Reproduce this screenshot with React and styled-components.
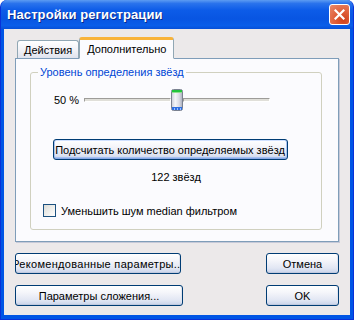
import React from 'react'
import styled, { createGlobalStyle } from 'styled-components'

const GlobalStyle = createGlobalStyle`
  html, body {
    margin: 0;
    padding: 0;
    background: #ffffff;
  }
  body {
    font-family: "Liberation Sans", Arial, sans-serif;
    font-size: 11px;
    color: #000;
  }
`

const Window = styled.div`
  width: 354px;
  height: 320px;
  box-sizing: border-box;
  display: flex;
  flex-direction: column;
  background: #0055e5;
  border: 1px solid #0831d9;
  border-top: none;
  border-radius: 7px 7px 0 0;
  overflow: hidden;
`

const TitleBar = styled.div`
  height: 29px;
  flex: none;
  display: flex;
  align-items: center;
  justify-content: space-between;
  padding: 0 3px 0 6px;
  background: linear-gradient(180deg, #5d9cf2 0%, #2a73ec 12%, #0d5ce8 35%, #0855e2 65%, #0a5ee9 88%, #0650d8 100%);
  color: #ffffff;
  font-family: "Liberation Sans", Arial, sans-serif;
  font-weight: bold;
  font-size: 13px;
  letter-spacing: 0.1px;
  text-shadow: 1px 1px 0 #0a2a8a;
`

const CloseButton = styled.div`
  width: 19px;
  height: 19px;
  border: 1px solid #ffffff;
  border-radius: 3px;
  background: radial-gradient(circle at 70% 80%, #d0411c 0%, #e0603b 45%, #e98a6c 100%);
  display: flex;
  align-items: center;
  justify-content: center;
`

const Client = styled.div`
  flex: 1;
  margin: 0 3px 4px;
  background: #ece9ea;
  padding: 7px 11px 0;
  display: flex;
  flex-direction: column;
`

const TabRow = styled.div`
  display: flex;
  align-items: flex-end;
  height: 22px;
  padding-left: 2px;
  position: relative;
  z-index: 1;
`

const Tab = styled.div`
  box-sizing: border-box;
  height: ${p => (p.$active ? '22px' : '18px')};
  padding: 0 ${p => (p.$active ? '7px' : '6px')};
  display: flex;
  align-items: center;
  border: 1px solid #91a7b4;
  border-bottom: ${p => (p.$active ? '1px solid #fbfbfe' : 'none')};
  border-top: ${p => (p.$active ? '3px solid #f8b33a' : '1px solid #91a7b4')};
  border-radius: 3px 3px 0 0;
  background: ${p => (p.$active ? '#fbfbfe' : 'linear-gradient(180deg, #ffffff 0%, #f3f3f7 50%, #dfe3ee 100%)')};
  margin-bottom: ${p => (p.$active ? '-1px' : '0')};
  font-size: 11px;
  padding-top: ${p => (p.$active ? '0' : '1px')};
`

const Panel = styled.div`
  box-sizing: border-box;
  width: 324px;
  height: 184px;
  border: 1px solid #7f9db9;
  background: #fbfbfe;
  box-shadow: 1px 1px 0 #c6c9d8;
  padding: 7px 16px 0 14px;
`

const GroupBox = styled.fieldset`
  box-sizing: border-box;
  margin: 0;
  height: 164px;
  border: 1px solid #d0d0bf;
  border-radius: 3px;
  padding: 0;
  display: flex;
  flex-direction: column;
`

const Legend = styled.legend`
  margin-left: 7px;
  padding: 0 2px;
  color: #0046d5;
  font-size: 11px;
`

const SliderRow = styled.div`
  display: flex;
  align-items: center;
  height: 22px;
  margin-top: 11px;
  padding-left: 23px;
`

const SliderLabel = styled.span`
  width: 30px;
`

const Track = styled.div`
  width: 186px;
  height: 22px;
  display: flex;
  align-items: center;
`

const TrackLine = styled.div`
  box-sizing: border-box;
  flex: 1;
  height: 4px;
  border-top: 1px solid #9d9c99;
  border-left: 1px solid #9d9c99;
  border-bottom: 1px solid #ffffff;
  border-right: 1px solid #ffffff;
  background: #e0dfd9;
`

const Button = styled.div`
  box-sizing: border-box;
  width: ${p => p.$w}px;
  height: 21px;
  flex: none;
  display: flex;
  align-items: center;
  justify-content: center;
  white-space: nowrap;
  overflow: hidden;
  border: 1px solid #003c74;
  border-radius: 3px;
  background: linear-gradient(180deg, #ffffff 0%, #f4f5fa 35%, #e1e6f3 75%, #c9d3ea 100%);
  box-shadow: ${p => (p.$default
    ? 'inset 0 -1px #8aa9e6, inset 1px 0 #a9c2f1, inset -1px 0 #a9c2f1, inset 0 1px #cfe0ff, inset 0 -2px #a6c0f0'
    : 'inset 0 -1px #c0c9de, inset -1px 0 #e0e4ee')};
  font-size: 11px;
  letter-spacing: ${p => p.$spacing || 0}px;
`

const CenterRow = styled.div`
  display: flex;
  justify-content: center;
  margin-top: ${p => p.$mt}px;
  padding-right: ${p => p.$pr || 0}px;
`

const CheckRow = styled.label`
  display: flex;
  align-items: center;
  gap: 5px;
  margin-top: 21px;
  padding-left: 12px;
`

const CheckBox = styled.span`
  box-sizing: border-box;
  width: 13px;
  height: 13px;
  border: 1px solid #1c5180;
  background: linear-gradient(135deg, #dcdcd7 0%, #f5f5f3 70%, #ffffff 100%);
`

const Footer = styled.div`
  display: flex;
  flex-direction: column;
  gap: 11px;
  margin-top: 11px;
`

const FooterRow = styled.div`
  display: flex;
  justify-content: space-between;
  width: 324px;
`

function SliderThumb() {
  return (
    <svg width="12" height="22" viewBox="0 0 12 22">
      <defs>
        <linearGradient id="th" x1="0" x2="1" y1="0" y2="0">
          <stop offset="0" stopColor="#c9ccd8" />
          <stop offset="0.35" stopColor="#f4f5f8" />
          <stop offset="0.7" stopColor="#d9dbe4" />
          <stop offset="1" stopColor="#a8acbb" />
        </linearGradient>
      </defs>
      <rect x="0.5" y="0.5" width="11" height="21" rx="2" fill="url(#th)" stroke="#7a8190" />
      <rect x="1" y="1" width="10" height="2" fill="#21c33d" />
      <rect x="1" y="3" width="10" height="1" fill="#8ee08e" />
      <rect x="1" y="18" width="10" height="3" fill="#2f6fe0" />
      <rect x="3" y="19" width="1" height="2" fill="#9cc0ff" />
      <rect x="6" y="19" width="1" height="2" fill="#9cc0ff" />
      <rect x="9" y="19" width="1" height="2" fill="#9cc0ff" />
    </svg>
  )
}

function CloseIcon() {
  return (
    <svg width="11" height="11" viewBox="0 0 11 11">
      <path d="M1.5 1.5 L9.5 9.5 M9.5 1.5 L1.5 9.5" stroke="#ffffff" strokeWidth="2.2" strokeLinecap="square" />
    </svg>
  )
}

export default function App() {
  return (
    <>
      <GlobalStyle />
      <Window>
        <TitleBar>
          <span>Настройки регистрации</span>
          <CloseButton><CloseIcon /></CloseButton>
        </TitleBar>
        <Client>
          <TabRow>
            <Tab>Действия</Tab>
            <Tab $active>Дополнительно</Tab>
          </TabRow>
          <Panel>
            <GroupBox>
              <Legend>Уровень определения звёзд</Legend>
              <SliderRow>
                <SliderLabel>50 %</SliderLabel>
                <Track>
                  <TrackLine />
                  <SliderThumb />
                  <TrackLine />
                </Track>
              </SliderRow>
              <CenterRow $mt={28} $pr={12}>
                <Button $w={235} $default>Подсчитать количество определяемых звёзд</Button>
              </CenterRow>
              <CenterRow $mt={11} $pr={0}>122 звёзд</CenterRow>
              <CheckRow>
                <CheckBox />
                Уменьшить шум median фильтром
              </CheckRow>
            </GroupBox>
          </Panel>
          <Footer>
            <FooterRow>
              <Button $w={166} $spacing={0.3}>Рекомендованные параметры...</Button>
              <Button $w={73}>Отмена</Button>
            </FooterRow>
            <FooterRow>
              <Button $w={168}>Параметры сложения...</Button>
              <Button $w={73}>OK</Button>
            </FooterRow>
          </Footer>
        </Client>
      </Window>
    </>
  )
}
